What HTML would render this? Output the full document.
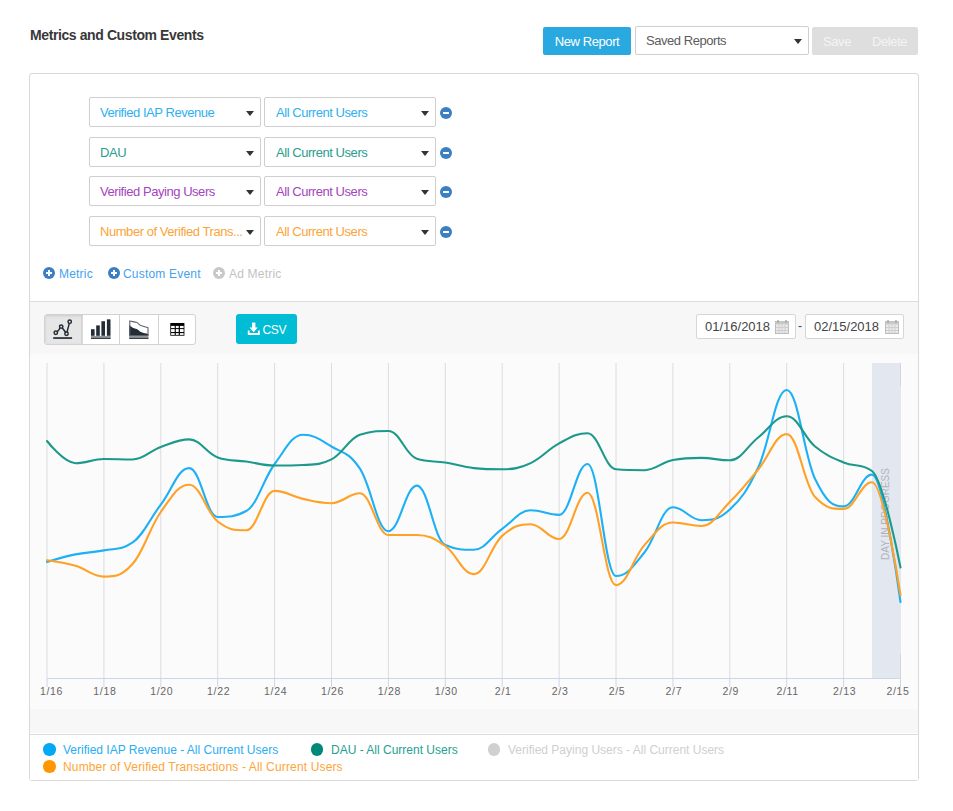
<!DOCTYPE html>
<html><head><meta charset="utf-8">
<style>
*{box-sizing:border-box;margin:0;padding:0}
html,body{width:953px;height:811px;overflow:hidden;background:#fff;font-family:"Liberation Sans",sans-serif;color:#333}
.a{position:absolute}
.title{left:30px;top:27px;font-size:14px;font-weight:bold;color:#383838;letter-spacing:-0.4px;line-height:16px}
.btn-new{left:543px;top:27px;width:88px;height:28px;background:#2aa8e0;border-radius:2px;color:#fff;font-size:13px;letter-spacing:-0.4px;line-height:29px;text-align:center}
.sel{background:#fff;border:1px solid #cfcfcf;border-radius:2px}
.saved{left:635px;top:26px;width:174px;height:29px}
.caret{position:absolute;width:0;height:0;border-left:4px solid transparent;border-right:4px solid transparent;border-top:5px solid #333}
.savedel{left:812px;top:27px;width:106px;height:28px;background:#dedede;border-radius:2px;color:#f4f4f4;font-size:13px;letter-spacing:-0.4px;line-height:29px}
.card{left:29px;top:73px;width:890px;height:708px;border:1px solid #d9d9d9;border-radius:3px}
.dd{position:absolute;height:30px;font-size:13px;letter-spacing:-0.45px;line-height:29px;padding-left:10px;white-space:nowrap}
.minus{position:absolute;width:12px;height:12px;border-radius:50%;background:#3b7fc2}
.minus:after{content:"";position:absolute;left:3px;top:5px;width:6px;height:2px;background:#fff}
.plus{position:absolute;width:12px;height:12px;border-radius:50%;background:#3b7fc2}
.plus:before{content:"";position:absolute;left:3px;top:5px;width:6px;height:2px;background:#fff}
.plus:after{content:"";position:absolute;left:5px;top:3px;width:2px;height:6px;background:#fff}
.link{position:absolute;font-size:12px;line-height:16px;color:#45a2ee;white-space:nowrap;letter-spacing:0.2px}
.panel{left:30px;top:301px;width:888px;height:432px;background:#f7f7f7;border-top:1px solid #dcdcdc}
.bgroup{left:44px;top:314px;width:152px;height:31px;border:1px solid #d2d2d2;border-radius:3px;background:#fff;overflow:hidden}
.bg1{position:absolute;left:0;top:0;width:38px;height:29px;background:#e6e6e6;box-shadow:inset 0 1px 3px rgba(0,0,0,.12)}
.div{position:absolute;top:0;width:1px;height:29px;background:#d2d2d2}
.csv{left:236px;top:314px;width:61px;height:30px;background:#00bcd4;border-radius:3px;color:#fff;font-size:12.5px}
.date{position:absolute;top:314px;height:25px;background:#fff;border:1px solid #d6d6d6;border-radius:2px;font-size:13px;line-height:24px;color:#444;padding-left:8px}
.legend{position:absolute;font-size:12px;line-height:14px;white-space:nowrap}
.dot{position:absolute;width:12.5px;height:12.5px;border-radius:50%}
</style></head><body>
<div class="a title">Metrics and Custom Events</div>
<div class="a btn-new">New Report</div>
<div class="a sel saved"><span style="position:absolute;left:10px;top:6px;font-size:13px;letter-spacing:-0.45px;color:#5c5c5c;line-height:16px">Saved Reports</span><div class="caret" style="left:158px;top:12px"></div></div>
<div class="a savedel"><span style="position:absolute;left:11px">Save</span><span style="position:absolute;left:60px">Delete</span></div>
<div class="a card"></div>

<!-- metric rows -->
<div class="dd sel" style="left:89px;top:97px;width:172px;color:#2fb0f0">Verified IAP Revenue<div class="caret" style="left:156px;top:13px"></div></div>
<div class="dd sel" style="left:264px;top:97px;width:172px;color:#2fb0f0;padding-left:11px">All Current Users<div class="caret" style="left:156px;top:13px"></div></div>
<div class="minus" style="left:439.9px;top:107.4px"></div>
<div class="dd sel" style="left:89px;top:136.5px;width:172px;color:#2a9d8f">DAU<div class="caret" style="left:156px;top:13px"></div></div>
<div class="dd sel" style="left:264px;top:136.5px;width:172px;color:#2a9d8f;padding-left:11px">All Current Users<div class="caret" style="left:156px;top:13px"></div></div>
<div class="minus" style="left:439.9px;top:146.9px"></div>
<div class="dd sel" style="left:89px;top:176px;width:172px;color:#a345bd">Verified Paying Users<div class="caret" style="left:156px;top:13px"></div></div>
<div class="dd sel" style="left:264px;top:176px;width:172px;color:#a345bd;padding-left:11px">All Current Users<div class="caret" style="left:156px;top:13px"></div></div>
<div class="minus" style="left:439.9px;top:186.4px"></div>
<div class="dd sel" style="left:89px;top:215.5px;width:172px;color:#fba43a">Number of Verified Trans...<div class="caret" style="left:156px;top:13px"></div></div>
<div class="dd sel" style="left:264px;top:215.5px;width:172px;color:#fba43a;padding-left:11px">All Current Users<div class="caret" style="left:156px;top:13px"></div></div>
<div class="minus" style="left:439.9px;top:225.9px"></div>

<div class="plus" style="left:43.1px;top:267px"></div><div class="link" style="left:59px;top:266px">Metric</div>
<div class="plus" style="left:107.7px;top:267px"></div><div class="link" style="left:123px;top:266px">Custom Event</div>
<div class="plus" style="left:213.2px;top:267px;background:#c8c8c8"></div><div class="link" style="left:229px;top:266px;color:#c2c2c2">Ad Metric</div>

<div class="a panel"></div>
<div class="a bgroup"><div class="bg1"></div><div class="div" style="left:36px"></div><div class="div" style="left:74px"></div><div class="div" style="left:113px"></div>
<svg style="position:absolute;left:-1px;top:-1px" width="152" height="31" viewBox="44 314 152 31">
<g fill="none" stroke="#242c36" stroke-width="1.5">
<path d="M57.2 331.7 C58.5 330.5 59.5 329.5 60.1 327.8 M62.4 328 L65.6 332.3 M67 332.1 L69.3 323.4"/>
<circle cx="55.8" cy="332.8" r="1.7"/><circle cx="61.2" cy="326.6" r="1.7"/><circle cx="66.5" cy="333.8" r="1.7"/><circle cx="69.7" cy="321.8" r="1.7"/>
</g>
<rect x="53.2" y="337.2" width="18.9" height="1.7" fill="#242c36"/>
<g fill="#242c36">
<rect x="91" y="329.2" width="3.6" height="6.6"/><rect x="96.2" y="325.4" width="3.6" height="10.4"/><rect x="101.4" y="321.2" width="3.6" height="14.6"/><rect x="106.9" y="319.35" width="3.6" height="16.45"/>
<rect x="91" y="336.1" width="19.7" height="1.7" fill="#858b92"/><rect x="91" y="337.8" width="19.7" height="1.1"/>
<path d="M129.2 325 C131.5 327.5 134 328.5 136.8 328.9 C138.5 329.5 139.5 331.5 141 332 C143.5 333 146 333.3 148.4 334.2 L148.4 335.8 L129.2 335.8Z"/>
<rect x="129.2" y="336.1" width="19.3" height="1.7" fill="#858b92"/><rect x="129.2" y="337.8" width="19.3" height="1.1"/>
</g>
<path d="M129.8 335.8 V321 C132 321.3 134.5 322 136.4 322.2 C138.3 322.8 139.3 325 140.8 325.5 C143.5 326.5 146 327 148 327.8 V335.8" fill="none" stroke="#5d636b" stroke-width="1.1"/>
<rect x="170.3" y="323" width="14.1" height="12.7" fill="#000"/>
<g fill="#fff"><rect x="171.1" y="325.9" width="3.6" height="2.2"/><rect x="175.8" y="325.9" width="2.9" height="2.2"/><rect x="179.9" y="325.9" width="3.7" height="2.2"/>
<rect x="171.1" y="329.1" width="3.6" height="2.9"/><rect x="175.8" y="329.1" width="2.9" height="2.9"/><rect x="179.9" y="329.1" width="3.7" height="2.9"/>
<rect x="171.1" y="333.1" width="3.6" height="1.8"/><rect x="175.8" y="333.1" width="2.9" height="1.8"/><rect x="179.9" y="333.1" width="3.7" height="1.8"/></g>
</svg>
</div>
<div class="a csv"><svg style="position:absolute;left:0;top:0" width="61" height="30" viewBox="236 314 61 30"><g fill="#fff">
<rect x="252" y="322.6" width="3.4" height="6"/><path d="M249.5 327.6 L257.9 327.6 L253.7 332.2Z"/>
<path d="M247.8 330.5 H249.6 V333.1 H258 V330.5 H259.8 V334.9 H247.8Z"/></g></svg>
<span style="position:absolute;left:26.5px;top:8.7px;line-height:14px;font-size:12px;letter-spacing:-0.3px">CSV</span></div>
<div class="date" style="left:696px;width:100px">01/16/2018<svg style="position:absolute;left:78px;top:4px" width="14" height="15" viewBox="0 0 14 15"><rect x="0.5" y="2.5" width="13" height="12" fill="#e9e9e9" stroke="#bdbdbd"/><rect x="0.5" y="2.5" width="13" height="3" fill="#c9c9c9"/><path d="M3 1v3M11 1v3" stroke="#aaa" stroke-width="1.5"/><path d="M1 8.5h12M1 11.5h12M4 6v8M7 6v8M10 6v8" stroke="#cfcfcf" stroke-width="1"/></svg></div>
<div class="a" style="left:798px;top:319px;font-size:12px;color:#444">-</div>
<div class="date" style="left:805px;width:99px">02/15/2018<svg style="position:absolute;left:79px;top:4px" width="14" height="15" viewBox="0 0 14 15"><rect x="0.5" y="2.5" width="13" height="12" fill="#e9e9e9" stroke="#bdbdbd"/><rect x="0.5" y="2.5" width="13" height="3" fill="#c9c9c9"/><path d="M3 1v3M11 1v3" stroke="#aaa" stroke-width="1.5"/><path d="M1 8.5h12M1 11.5h12M4 6v8M7 6v8M10 6v8" stroke="#cfcfcf" stroke-width="1"/></svg></div>

<svg class="a" style="left:0;top:0" width="953" height="811">
<rect x="30" y="354" width="888" height="355" fill="#fbfbfb"/>
<path d="M47.00 363V678" stroke="#dcdcdc" stroke-width="1"/>
<path d="M103.90 363V678" stroke="#dcdcdc" stroke-width="1"/>
<path d="M160.80 363V678" stroke="#dcdcdc" stroke-width="1"/>
<path d="M217.70 363V678" stroke="#dcdcdc" stroke-width="1"/>
<path d="M274.60 363V678" stroke="#dcdcdc" stroke-width="1"/>
<path d="M331.50 363V678" stroke="#dcdcdc" stroke-width="1"/>
<path d="M388.40 363V678" stroke="#dcdcdc" stroke-width="1"/>
<path d="M445.30 363V678" stroke="#dcdcdc" stroke-width="1"/>
<path d="M502.20 363V678" stroke="#dcdcdc" stroke-width="1"/>
<path d="M559.10 363V678" stroke="#dcdcdc" stroke-width="1"/>
<path d="M616.00 363V678" stroke="#dcdcdc" stroke-width="1"/>
<path d="M672.90 363V678" stroke="#dcdcdc" stroke-width="1"/>
<path d="M729.80 363V678" stroke="#dcdcdc" stroke-width="1"/>
<path d="M786.70 363V678" stroke="#dcdcdc" stroke-width="1"/>
<path d="M843.60 363V678" stroke="#dcdcdc" stroke-width="1"/>
<path d="M900.50 363V678" stroke="#dcdcdc" stroke-width="1"/>
<rect x="872" y="363" width="29" height="315" fill="#e3e7ef"/>
<path d="M900.5 363V386M900.5 654V678" stroke="#d6d6d6"/>
<path d="M47 678.5H901" stroke="#ccd6eb"/>
<path d="M47.00 678V687" stroke="#ccd6eb"/>
<path d="M103.90 678V687" stroke="#ccd6eb"/>
<path d="M160.80 678V687" stroke="#ccd6eb"/>
<path d="M217.70 678V687" stroke="#ccd6eb"/>
<path d="M274.60 678V687" stroke="#ccd6eb"/>
<path d="M331.50 678V687" stroke="#ccd6eb"/>
<path d="M388.40 678V687" stroke="#ccd6eb"/>
<path d="M445.30 678V687" stroke="#ccd6eb"/>
<path d="M502.20 678V687" stroke="#ccd6eb"/>
<path d="M559.10 678V687" stroke="#ccd6eb"/>
<path d="M616.00 678V687" stroke="#ccd6eb"/>
<path d="M672.90 678V687" stroke="#ccd6eb"/>
<path d="M729.80 678V687" stroke="#ccd6eb"/>
<path d="M786.70 678V687" stroke="#ccd6eb"/>
<path d="M843.60 678V687" stroke="#ccd6eb"/>
<path d="M900.50 678V687" stroke="#ccd6eb"/>
<text x="51.5" y="695" text-anchor="middle" font-family="Liberation Sans" font-size="10.5" letter-spacing="0.7" fill="#666">1/16</text>
<text x="104.9" y="695" text-anchor="middle" font-family="Liberation Sans" font-size="10.5" letter-spacing="0.7" fill="#666">1/18</text>
<text x="161.8" y="695" text-anchor="middle" font-family="Liberation Sans" font-size="10.5" letter-spacing="0.7" fill="#666">1/20</text>
<text x="218.7" y="695" text-anchor="middle" font-family="Liberation Sans" font-size="10.5" letter-spacing="0.7" fill="#666">1/22</text>
<text x="275.6" y="695" text-anchor="middle" font-family="Liberation Sans" font-size="10.5" letter-spacing="0.7" fill="#666">1/24</text>
<text x="332.5" y="695" text-anchor="middle" font-family="Liberation Sans" font-size="10.5" letter-spacing="0.7" fill="#666">1/26</text>
<text x="389.4" y="695" text-anchor="middle" font-family="Liberation Sans" font-size="10.5" letter-spacing="0.7" fill="#666">1/28</text>
<text x="446.3" y="695" text-anchor="middle" font-family="Liberation Sans" font-size="10.5" letter-spacing="0.7" fill="#666">1/30</text>
<text x="503.2" y="695" text-anchor="middle" font-family="Liberation Sans" font-size="10.5" letter-spacing="0.7" fill="#666">2/1</text>
<text x="560.1" y="695" text-anchor="middle" font-family="Liberation Sans" font-size="10.5" letter-spacing="0.7" fill="#666">2/3</text>
<text x="617.0" y="695" text-anchor="middle" font-family="Liberation Sans" font-size="10.5" letter-spacing="0.7" fill="#666">2/5</text>
<text x="673.9" y="695" text-anchor="middle" font-family="Liberation Sans" font-size="10.5" letter-spacing="0.7" fill="#666">2/7</text>
<text x="730.8" y="695" text-anchor="middle" font-family="Liberation Sans" font-size="10.5" letter-spacing="0.7" fill="#666">2/9</text>
<text x="787.7" y="695" text-anchor="middle" font-family="Liberation Sans" font-size="10.5" letter-spacing="0.7" fill="#666">2/11</text>
<text x="844.6" y="695" text-anchor="middle" font-family="Liberation Sans" font-size="10.5" letter-spacing="0.7" fill="#666">2/13</text>
<text x="898.0" y="695" text-anchor="middle" font-family="Liberation Sans" font-size="10.5" letter-spacing="0.7" fill="#666">2/15</text>
<text transform="translate(888.5 514) rotate(-90)" text-anchor="middle" font-family="Liberation Sans" font-size="10" fill="#b0b5bd">DAY IN PROGRESS</text>
<path d="M47.0 562.0C47.0 562.0 64.1 556.7 75.5 554.4C86.8 552.1 92.5 552.7 103.9 550.4C115.3 548.1 121.0 550.4 132.3 542.7C143.7 535.0 149.4 519.5 160.8 504.6C172.2 489.7 177.9 468.1 189.2 468.1C200.6 468.1 206.3 517.0 217.7 517.0C229.1 517.0 234.8 517.0 246.2 511.0C257.5 505.0 263.2 479.2 274.6 464.0C286.0 448.8 291.7 434.8 303.1 434.8C314.4 434.8 320.1 439.7 331.5 446.5C342.9 453.3 348.6 451.8 359.9 468.7C371.3 485.6 377.0 531.2 388.4 531.2C399.8 531.2 405.5 485.6 416.8 485.6C428.2 485.6 433.9 540.2 445.3 545.0C456.7 549.8 462.4 549.8 473.8 549.8C485.1 549.8 490.8 536.7 502.2 528.8C513.6 520.9 519.3 510.3 530.6 510.3C542.0 510.3 547.7 514.9 559.1 514.9C570.5 514.9 576.2 464.0 587.5 464.0C598.9 464.0 604.6 576.0 616.0 576.0C627.4 576.0 633.1 566.2 644.4 552.5C655.8 538.8 661.5 507.3 672.9 507.3C684.3 507.3 690.0 520.2 701.4 520.2C712.7 520.2 718.4 520.0 729.8 509.5C741.2 499.0 746.9 491.4 758.2 467.5C769.6 443.6 775.3 390.0 786.7 390.0C798.1 390.0 803.8 455.7 815.1 479.0C826.5 502.3 832.2 506.4 843.6 506.4C855.0 506.4 860.7 474.6 872.0 474.6C883.4 474.6 900.5 602.0 900.5 602.0" fill="none" stroke="#1eb0f4" stroke-width="2.1" stroke-linejoin="round" stroke-linecap="round"/>
<path d="M47.0 560.2C47.0 560.2 64.1 562.5 75.5 565.8C86.8 569.1 92.5 576.6 103.9 576.6C115.3 576.6 121.0 576.6 132.3 564.3C143.7 552.0 149.4 527.9 160.8 512.0C172.2 496.1 177.9 484.7 189.2 484.7C200.6 484.7 206.3 512.7 217.7 521.5C229.1 530.3 234.8 530.3 246.2 530.3C257.5 530.3 263.2 490.9 274.6 490.9C286.0 490.9 291.7 496.4 303.1 498.9C314.4 501.4 320.1 503.2 331.5 503.2C342.9 503.2 348.6 493.3 359.9 493.3C371.3 493.3 377.0 535.0 388.4 535.0C399.8 535.0 405.5 535.0 416.8 535.0C428.2 535.0 433.9 538.2 445.3 546.0C456.7 553.8 462.4 574.1 473.8 574.1C485.1 574.1 490.8 545.9 502.2 535.9C513.6 525.9 519.3 524.2 530.6 524.2C542.0 524.2 547.7 539.0 559.1 539.0C570.5 539.0 576.2 492.7 587.5 492.7C598.9 492.7 604.6 585.1 616.0 585.1C627.4 585.1 633.1 557.6 644.4 545.1C655.8 532.6 661.5 522.5 672.9 522.5C684.3 522.5 690.0 526.0 701.4 526.0C712.7 526.0 718.4 513.3 729.8 502.0C741.2 490.7 746.9 483.1 758.2 469.5C769.6 455.9 775.3 434.1 786.7 434.1C798.1 434.1 803.8 485.1 815.1 497.0C826.5 508.9 832.2 508.9 843.6 508.9C855.0 508.9 860.7 482.3 872.0 482.3C883.4 482.3 900.5 595.1 900.5 595.1" fill="none" stroke="#ffa126" stroke-width="2.1" stroke-linejoin="round" stroke-linecap="round"/>
<path d="M47.0 441.0C47.0 441.0 64.1 463.2 75.5 463.2C86.8 463.2 92.5 459.0 103.9 459.0C115.3 459.0 121.0 459.5 132.3 459.5C143.7 459.5 149.4 451.0 160.8 447.0C172.2 443.0 177.9 439.4 189.2 439.4C200.6 439.4 206.3 453.5 217.7 457.5C229.1 461.5 234.8 459.9 246.2 461.5C257.5 463.1 263.2 465.5 274.6 465.5C286.0 465.5 291.7 465.5 303.1 465.0C314.4 464.5 320.1 465.0 331.5 459.4C342.9 453.8 348.6 438.6 359.9 434.8C371.3 431.0 377.0 431.0 388.4 431.0C399.8 431.0 405.5 455.1 416.8 458.8C428.2 462.5 433.9 460.6 445.3 462.5C456.7 464.4 462.4 466.9 473.8 468.1C485.1 469.3 490.8 469.3 502.2 469.3C513.6 469.3 519.3 468.3 530.6 463.1C542.0 457.9 547.7 449.4 559.1 443.4C570.5 437.4 576.2 433.2 587.5 433.2C598.9 433.2 604.6 468.4 616.0 469.3C627.4 470.2 633.1 470.2 644.4 470.2C655.8 470.2 661.5 462.1 672.9 460.0C684.3 457.9 690.0 457.9 701.4 457.9C712.7 457.9 718.4 460.3 729.8 460.3C741.2 460.3 746.9 446.3 758.2 437.5C769.6 428.7 775.3 416.3 786.7 416.3C798.1 416.3 803.8 437.3 815.1 446.5C826.5 455.7 832.2 457.6 843.6 462.5C855.0 467.4 860.7 462.5 872.0 471.0C883.4 479.5 900.5 567.5 900.5 567.5" fill="none" stroke="#1b998b" stroke-width="2.1" stroke-linejoin="round" stroke-linecap="round"/>
</svg>

<div style="position:absolute;left:30px;top:734px;width:888px;height:46px;background:#fff;border-top:1px solid #dcdcdc"></div>
<div class="dot" style="left:43px;top:743.3px;background:#03a9f4"></div><div class="legend" style="left:63px;top:742.5px;color:#29aef3">Verified IAP Revenue - All Current Users</div>
<div class="dot" style="left:310.7px;top:743.3px;background:#00897b"></div><div class="legend" style="left:331px;top:742.5px;color:#26a092">DAU - All Current Users</div>
<div class="dot" style="left:487.7px;top:743.3px;background:#d0d0d0"></div><div class="legend" style="left:508px;top:742.5px;color:#cfcfcf">Verified Paying Users - All Current Users</div>
<div class="dot" style="left:43px;top:760.1px;background:#ff9800"></div><div class="legend" style="left:63px;top:759.5px;color:#fda53a;letter-spacing:0.15px">Number of Verified Transactions - All Current Users</div>
</body></html>
